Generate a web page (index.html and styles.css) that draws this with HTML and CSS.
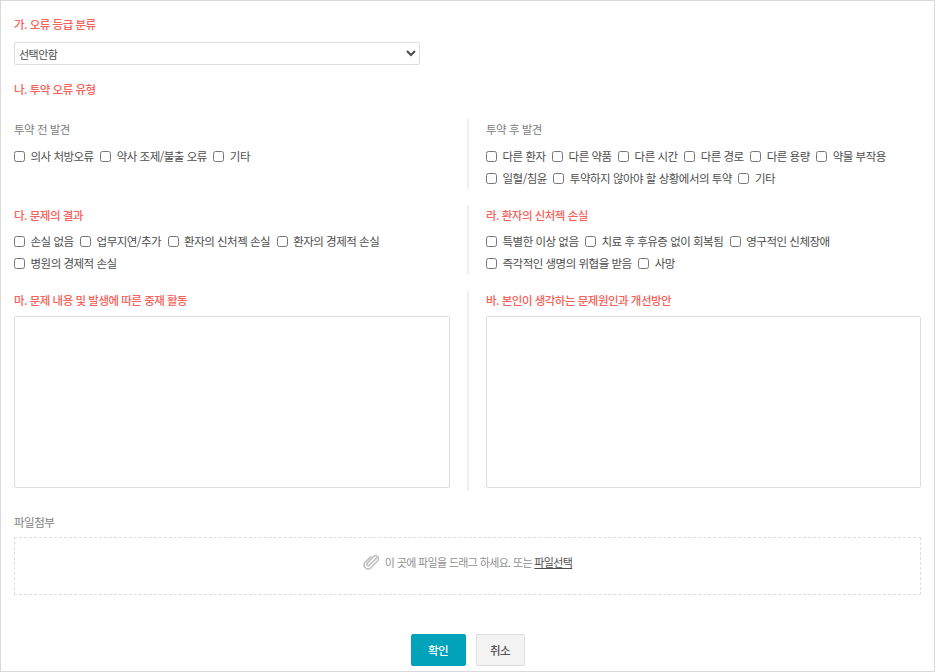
FILE: index.html
```html
<!DOCTYPE html>
<html lang="ko">
<head>
<meta charset="utf-8">
<title>오류 보고</title>
<link rel="stylesheet" href="styles.css">
</head>
<body>
<form class="frame">
  <h3 class="title t-first">가. 오류 등급 분류</h3>
  <select class="grade"><option>선택안함</option></select>
  <h3 class="title t-second">나. 투약 오류 유형</h3>

  <div class="split split-a">
    <div class="col">
      <h4 class="sub">투약 전 발견</h4>
      <div class="checks">
        <label class="check"><input type="checkbox"><span>의사 처방오류</span></label>
        <label class="check"><input type="checkbox"><span>약사 조제/불출 오류</span></label>
        <label class="check"><input type="checkbox"><span>기타</span></label>
      </div>
    </div>
    <div class="col col-r">
      <h4 class="sub">투약 후 발견</h4>
      <div class="checks">
        <label class="check"><input type="checkbox"><span>다른 환자</span></label>
        <label class="check"><input type="checkbox"><span>다른 약품</span></label>
        <label class="check"><input type="checkbox"><span>다른 시간</span></label>
        <label class="check"><input type="checkbox"><span>다른 경로</span></label>
        <label class="check"><input type="checkbox"><span>다른 용량</span></label>
        <label class="check"><input type="checkbox"><span>약물 부작용</span></label>
        <label class="check"><input type="checkbox"><span>일혈/침윤</span></label>
        <label class="check"><input type="checkbox"><span>투약하지 않아야 할 상황에서의 투약</span></label>
        <label class="check"><input type="checkbox"><span>기타</span></label>
      </div>
    </div>
  </div>

  <div class="split split-b">
    <div class="col">
      <h3 class="title">다. 문제의 결과</h3>
      <div class="checks">
        <label class="check"><input type="checkbox"><span>손실 없음</span></label>
        <label class="check"><input type="checkbox"><span>업무지연/추가</span></label>
        <label class="check"><input type="checkbox"><span>환자의 신처젝 손실</span></label>
        <label class="check"><input type="checkbox"><span>환자의 경제적 손실</span></label>
        <label class="check"><input type="checkbox"><span>병원의 경제적 손실</span></label>
      </div>
    </div>
    <div class="col col-r">
      <h3 class="title">라. 환자의 신처젝 손실</h3>
      <div class="checks">
        <label class="check"><input type="checkbox"><span>특별한 이상 없음</span></label>
        <label class="check"><input type="checkbox"><span>치료 후 후유증 없이 회복됨</span></label>
        <label class="check"><input type="checkbox"><span>영구적인 신체장애</span></label>
        <label class="check"><input type="checkbox"><span>즉각적인 생명의 위협을 받음</span></label>
        <label class="check"><input type="checkbox"><span>사망</span></label>
      </div>
    </div>
  </div>

  <div class="split split-c">
    <div class="col">
      <h3 class="title">마. 문제 내용 및 발생에 따른 중재 활동</h3>
      <textarea class="memo"></textarea>
    </div>
    <div class="col col-r">
      <h3 class="title">바. 본인이 생각하는 문제원인과 개선방안</h3>
      <textarea class="memo"></textarea>
    </div>
  </div>

  <h4 class="sub sub-file">파일첨부</h4>
  <div class="drop">
    <svg class="clip" width="16" height="16" viewBox="0 0 16 16" aria-hidden="true"><path d="M13.6 3.2 6 10.8a1.5 1.5 0 0 1-2.1-2.1l6.6-7a3 3 0 0 1 4.2 4.2l-7.4 7.6a4 4 0 0 1-5.6-5.6L7.5 2.2" transform="translate(0.2 0.6)" fill="none" stroke="#c4c4c4" stroke-width="1.7" stroke-linecap="round"/></svg>
    <span class="drop-text">이 곳에 파일을 드래그 하세요. 또는 <a class="pick" href="#">파일선택</a></span>
  </div>

  <div class="actions">
    <button type="button" class="btn btn-ok">확인</button>
    <button type="button" class="btn btn-cancel">취소</button>
  </div>
</form>
</body>
</html>
```

FILE: styles.css
```css
* { box-sizing: border-box; }
html, body { margin: 0; padding: 0; background: #fff; }
body {
  font-family: "Noto Sans CJK KR", "Noto Sans", sans-serif;
  font-size: 11px;
  color: #4d4d4d;
  letter-spacing: -0.5px;
}
.frame {
  width: 935px;
  height: 672px;
  border: 1px solid #d9d9d9;
  padding: 14px 13px 0;
  display: flex;
  flex-direction: column;
  overflow: hidden;
}
.title {
  margin: 0;
  font-size: 11.5px;
  line-height: 18px;
  font-weight: 500;
  color: #f6625a;
}
.t-second { margin-top: 15px; }
.sub {
  margin: 0;
  font-size: 11.5px;
  line-height: 18px;
  font-weight: 400;
  color: #808080;
}
.grade {
  display: block;
  width: 406px;
  height: 23px;
  margin-top: 9px;
  padding: 0;
  border: 1px solid #ddd;
  border-radius: 2px;
  background: #fff;
  color: #4d4d4d;
  font: inherit;
  letter-spacing: -0.5px;
}
.split { display: grid; grid-template-columns: 453px 454px; }
.col-r { border-left: 2px solid #efefef; padding-left: 17px; }
.col { padding-top: 1px; }
.split-c .col { padding-top: 0; }
.split-a { margin-top: 21px; height: 68px; }
.split-b { margin-top: 18px; height: 68px; }
.split-c { margin-top: 18px; height: 200px; }
.checks {
  display: flex;
  flex-wrap: wrap;
  column-gap: 6.5px;
  row-gap: 0;
}
.split-a .checks { margin-top: 7px; }
.split-b .checks { margin-top: 6px; }
.col .checks { padding-right: 20px; }
.check {
  display: flex;
  align-items: center;
  gap: 5.5px;
  height: 22px;
  font-size: 11.5px;
  white-space: nowrap;
}
.check input {
  width: 11px;
  height: 11px;
  margin: 0;
  flex: none;
}
.memo {
  display: block;
  width: 436px;
  height: 172px;
  margin-top: 7px;
  border: 1px solid #ddd;
  border-radius: 2px;
  background: #fff;
  resize: none;
}
.col-r .memo { width: 435px; }
.sub-file { margin-top: 22px; }
.drop {
  width: 907px;
  height: 58px;
  margin-top: 6px;
  padding-bottom: 8px;
  border: 1px dashed #ddd;
  display: flex;
  align-items: center;
  justify-content: center;
  gap: 6px;
  color: #909090;
  letter-spacing: -0.65px;
}
.clip { flex: none; }
.pick { color: #4d4d4d; text-decoration: underline; }
.actions {
  display: flex;
  justify-content: center;
  gap: 10px;
  margin-top: 39px;
}
.btn {
  height: 32px;
  border-radius: 2px;
  font: inherit;
  font-size: 11.5px;
  font-weight: 500;
  letter-spacing: -0.5px;
  padding: 0;
}
.btn-ok { width: 55px; background: #00a3b9; border: 1px solid #00a3b9; color: #fff; }
.btn-cancel { width: 49px; background: #f3f3f3; border: 1px solid #ddd; color: #555; }
```
